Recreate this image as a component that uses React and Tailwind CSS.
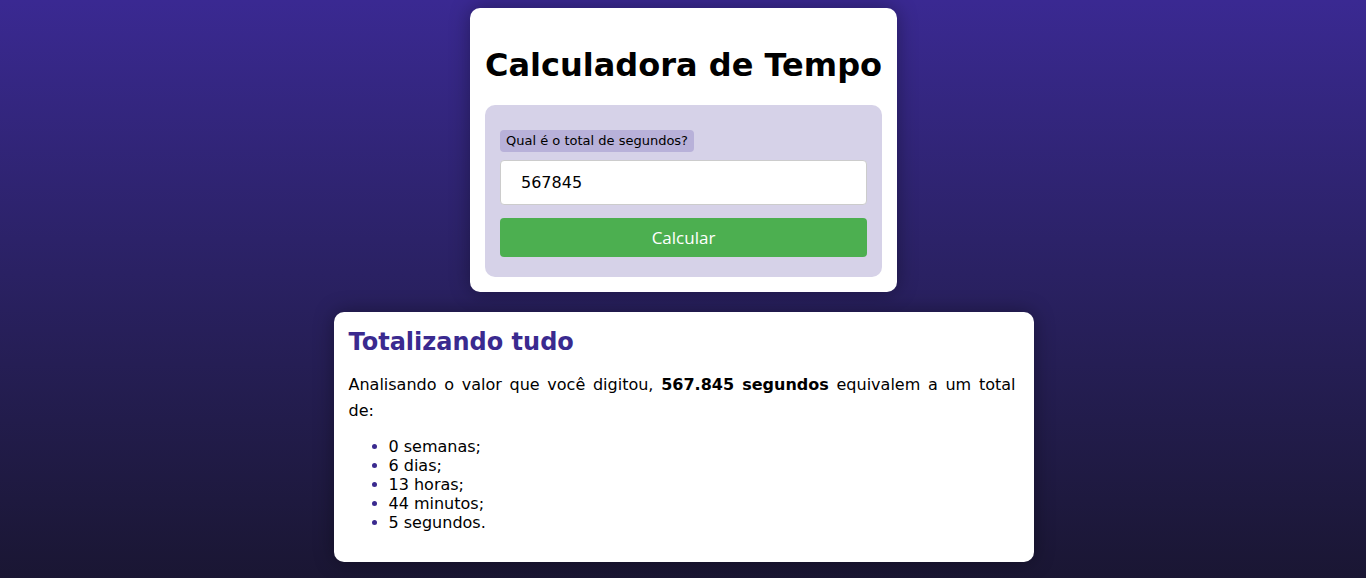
export default function App() {
  return (
    <div
      className="min-h-[578px] w-full bg-gradient-to-b from-[#3a2992] to-[#1a1633] flex flex-col items-center pt-2 pb-4 gap-5"
      style={{ fontFamily: '"DejaVu Sans", Verdana, sans-serif' }}
    >
      <div className="w-[427px] ml-px bg-white rounded-[10px] px-[15px] pt-[15px] pb-[15px] shadow-[0_0_20px_rgba(0,0,0,0.35)]">
        <h1 className="text-[32px] font-bold text-black text-center leading-[37px] mt-[24px] mb-[21px] whitespace-nowrap">
          Calculadora de Tempo
        </h1>
        <div className="bg-[#d6d2e8] rounded-[10px] px-[15px] pt-[23px] pb-[20px]">
          <span className="inline-block bg-[#b8b1d9] text-black text-[13px] leading-[16px] px-[6px] py-[3px] rounded-[4px]">
            Qual é o total de segundos?
          </span>
          <input
            type="text"
            defaultValue="567845"
            className="block w-full h-[45px] mt-[8px] bg-white border border-[#cccccc] rounded-[4px] pl-[20px] text-[16px] text-black outline-none"
            style={{ fontFamily: '"DejaVu Sans", Verdana, sans-serif' }}
          />
          <button
            className="block w-full h-[39px] mt-[13px] bg-[#4caf50] text-white text-[17px] rounded-[4px]"
            style={{ fontFamily: '"Open Sans", "Liberation Sans", sans-serif' }}
          >
            Calcular
          </button>
        </div>
      </div>

      <div className="w-[700px] ml-px bg-white rounded-[10px] px-[15px] pt-[15px] pb-[30px] shadow-[0_0_20px_rgba(0,0,0,0.35)]">
        <h2 className="text-[24px] font-bold text-[#3a2a8f] leading-[30px] mb-[15px]">
          Totalizando tudo
        </h2>
        <p className="text-[16px] text-black leading-[26px] text-justify mb-[13px] mr-[3px]">
          Analisando o valor que você digitou, <strong>567.845 segundos</strong> equivalem a um total de:
        </p>
        <ul className="list-disc pl-[40px] marker:text-[#3a2a8f] text-[16px] text-black leading-[19px]">
          <li>0 semanas;</li>
          <li>6 dias;</li>
          <li>13 horas;</li>
          <li>44 minutos;</li>
          <li>5 segundos.</li>
        </ul>
      </div>
    </div>
  );
}
